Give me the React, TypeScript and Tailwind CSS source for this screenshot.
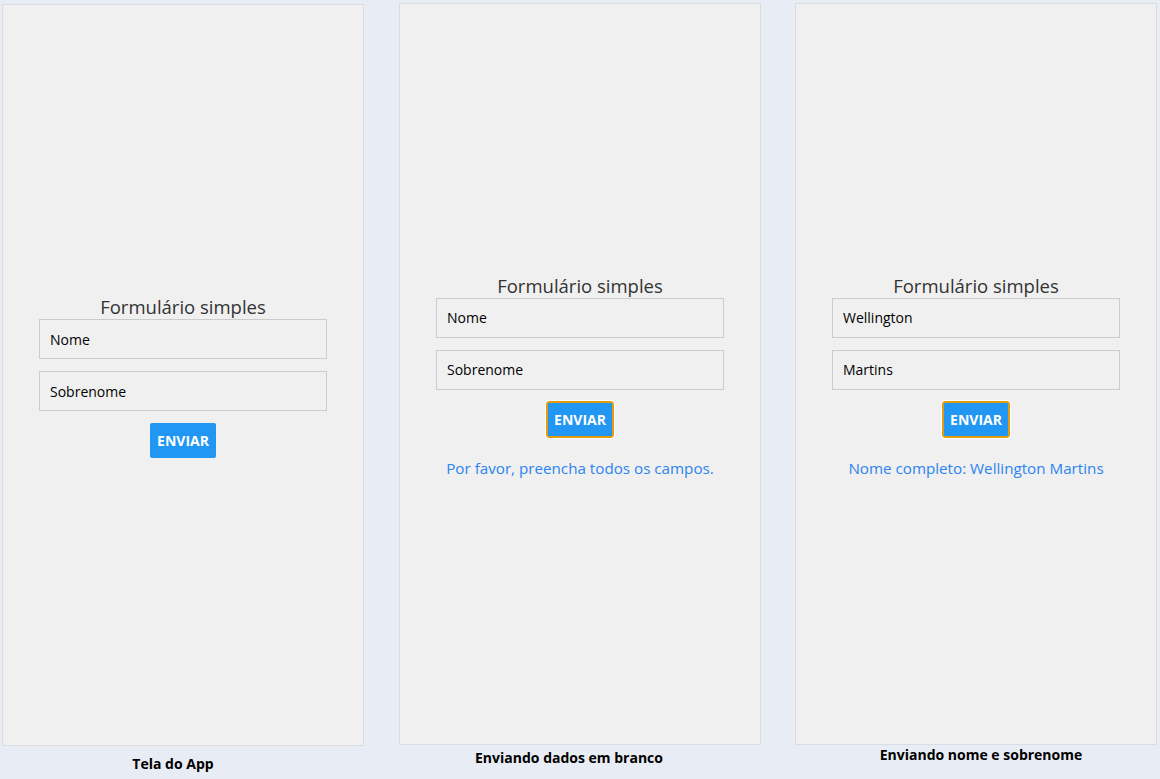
import React from "react";

type PanelProps = {
    nome: string;
    sobrenome: string;
    focused?: boolean;
    message?: string;
};

const font = { fontFamily: '"Open Sans", "Noto Sans", sans-serif' };

const FormPanel = ({ nome, sobrenome, focused, message }: PanelProps) => {
    return (
        <div className="flex h-[742px] w-[362px] flex-col items-center justify-center border border-[#dadcdf] bg-[#f0f0f0] pt-[3px]">
            <h1 className="text-[18.5px] leading-[24px] text-[#333]">Formulário simples</h1>
            <div className="flex h-[40px] w-[288px] items-center border border-[#cccccc] pl-[10px] text-[14px] text-black">
                {nome}
            </div>
            <div className="mt-[12px] flex h-[40px] w-[288px] items-center border border-[#cccccc] pl-[10px] text-[14px] text-black">
                {sobrenome}
            </div>
            {focused ? (
                <button className="mt-[11px] flex h-[37px] w-[68px] items-center justify-center rounded-[3px] border-2 border-[#e39a0b] bg-[#2196f3] text-[14px] font-bold text-white outline outline-1 outline-white">
                    ENVIAR
                </button>
            ) : (
                <button className="mt-[12px] flex h-[35px] w-[66px] items-center justify-center rounded-[2px] bg-[#2196f3] text-[14px] font-bold text-white">
                    ENVIAR
                </button>
            )}
            {message && <p className="mt-[20px] text-[15.2px] leading-[20px] text-[#2b84f0]">{message}</p>}
        </div>
    );
};

const App = () => {
    return (
        <div className="flex h-[779px] w-[1160px] bg-[#e8ecf4]" style={font}>
            <div className="ml-[2px] mt-[4px] flex w-[362px] flex-col">
                <FormPanel nome="Nome" sobrenome="Sobrenome" />
                <p className="mt-[8px] pr-[20px] text-center text-[14px] font-bold leading-[20px] text-black">Tela do App</p>
            </div>
            <div className="ml-[35px] mt-[3px] flex w-[362px] flex-col">
                <FormPanel
                    nome="Nome"
                    sobrenome="Sobrenome"
                    focused
                    message="Por favor, preencha todos os campos."
                />
                <p className="mt-[3px] pr-[22px] text-center text-[14px] font-bold leading-[20px] text-black">
                    Enviando dados em branco
                </p>
            </div>
            <div className="ml-[34px] mt-[3px] flex w-[362px] flex-col">
                <FormPanel
                    nome="Wellington"
                    sobrenome="Martins"
                    focused
                    message="Nome completo: Wellington Martins"
                />
                <p className="mt-0 pl-[10px] text-center text-[14px] font-bold leading-[20px] text-black">
                    Enviando nome e sobrenome
                </p>
            </div>
        </div>
    );
};

export default App;
